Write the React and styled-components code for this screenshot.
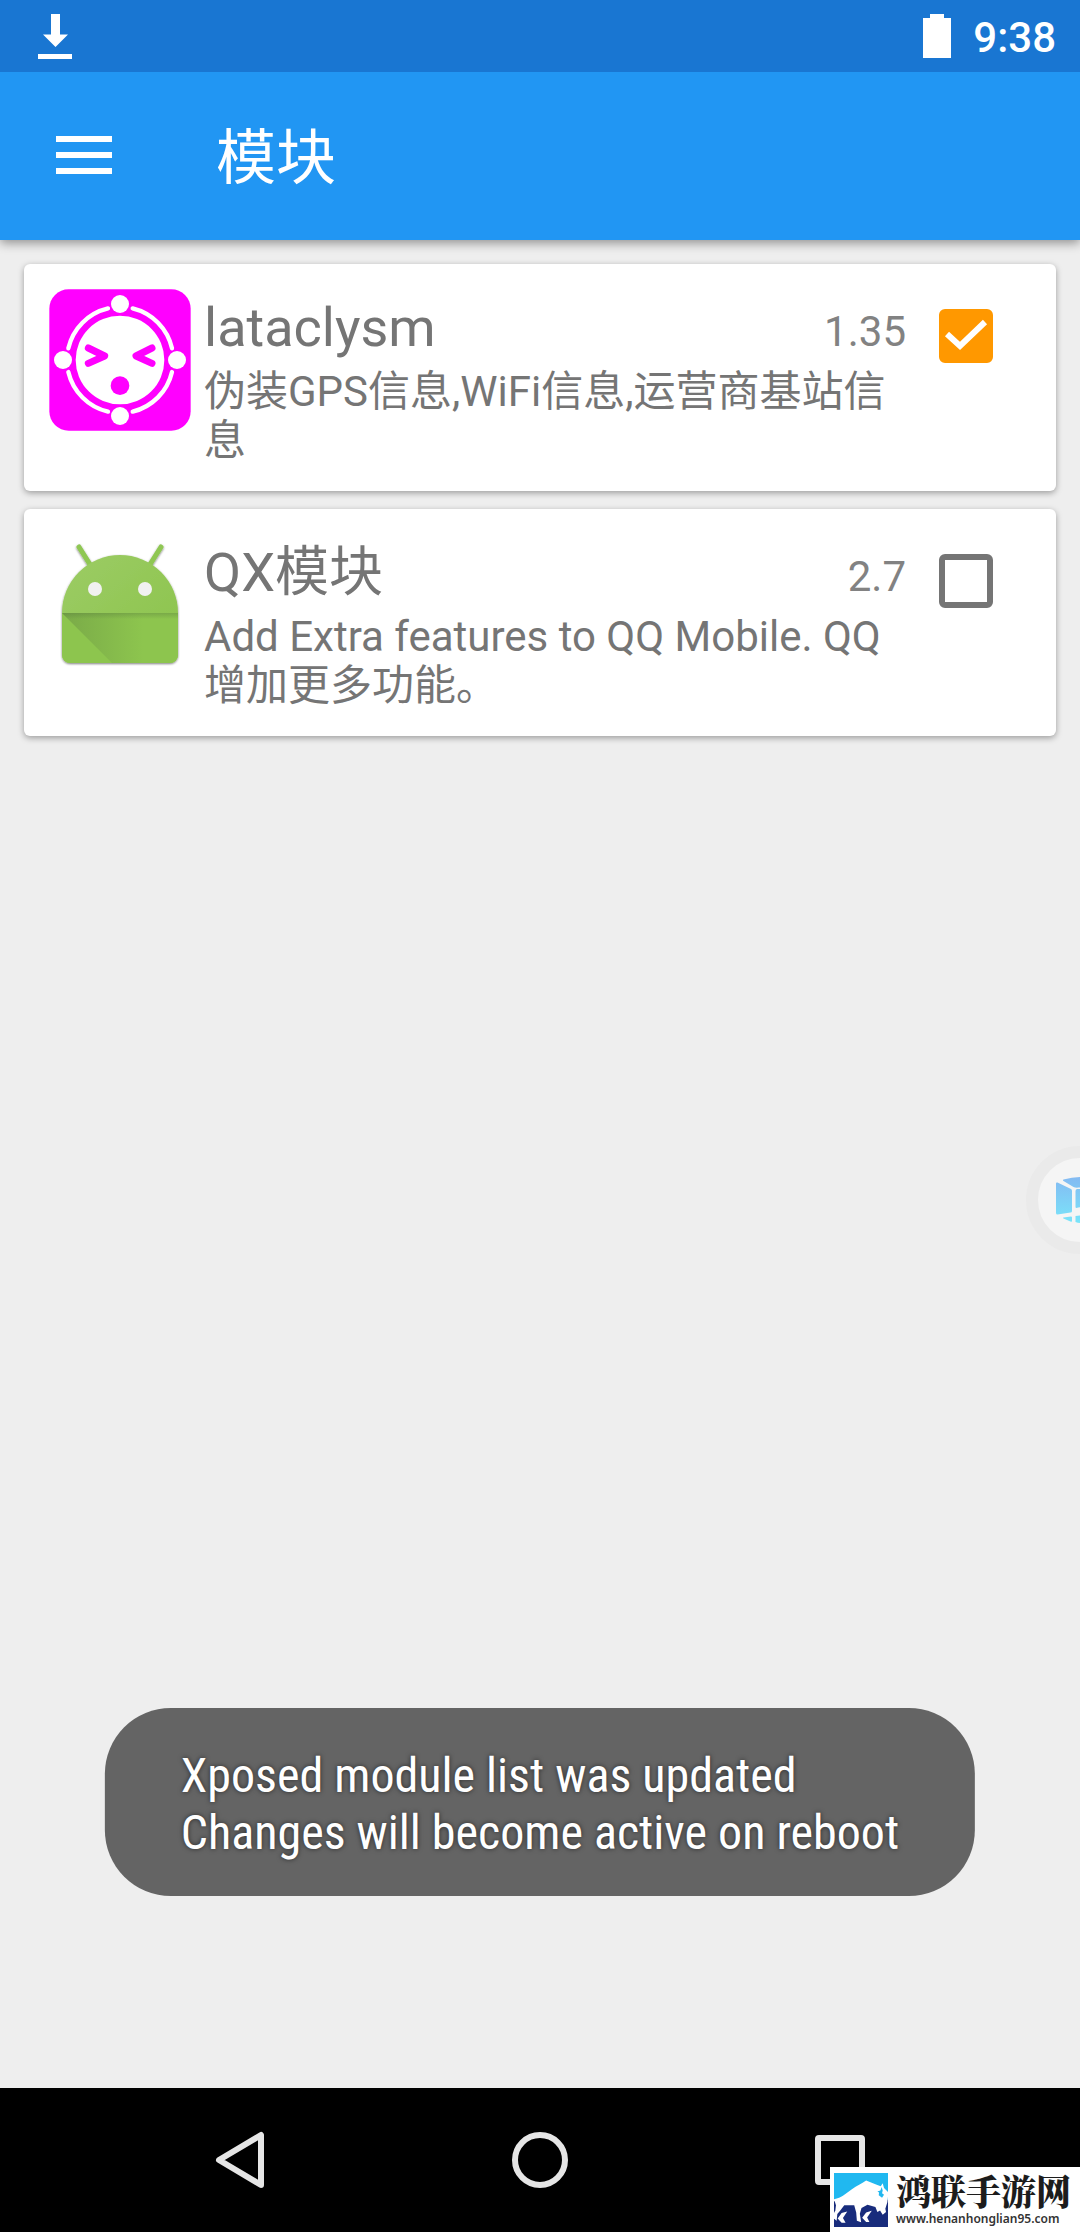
import React, { useState } from "react";
import styled, { createGlobalStyle } from "styled-components";

const MODULES = [
  {
    id: "lataclysm",
    name: "lataclysm",
    version: "1.35",
    description: "伪装GPS信息,WiFi信息,运营商基站信息",
    enabled: true,
    Icon: FaceIcon,
  },
  {
    id: "qx",
    name: "QX模块",
    version: "2.7",
    description: "Add Extra features to QQ Mobile. QQ增加更多功能。",
    enabled: false,
    Icon: AndroidIcon,
  },
];

function App() {
  const [modules, setModules] = useState(MODULES);

  const toggle = (id) => {
    setModules(
      modules.map((m) => (m.id === id ? { ...m, enabled: !m.enabled } : m))
    );
  };

  return (
    <Screen>
      <GlobalStyle />
      <StatusBar>
        <DownloadIcon />
        <StatusRight>
          <BatteryIcon />
          <Clock>9:38</Clock>
        </StatusRight>
      </StatusBar>
      <Toolbar>
        <MenuButton aria-label="menu">
          <svg width="56" height="40" viewBox="0 0 56 40" fill="#fff">
            <path d="M0 0h56v6H0zM0 16h56v6H0zM0 32h56v6H0z" />
          </svg>
        </MenuButton>
        <Title>模块</Title>
      </Toolbar>
      <ModuleList>
        {modules.map((module) => (
          <ModuleCard
            key={module.id}
            module={module}
            onToggle={() => toggle(module.id)}
          />
        ))}
      </ModuleList>
      <NavBar>
        <NavButton aria-label="back">
          <svg width="60" height="60" viewBox="0 0 60 60">
            <path d="M9 30 51 5v50z" />
          </svg>
        </NavButton>
        <NavButton aria-label="home">
          <svg width="60" height="60" viewBox="0 0 60 60">
            <circle cx="30" cy="30" r="25" />
          </svg>
        </NavButton>
        <NavButton aria-label="recents">
          <svg width="60" height="60" viewBox="0 0 60 60">
            <rect x="8" y="8" width="44" height="44" rx="1" />
          </svg>
        </NavButton>
      </NavBar>
      <Bubble aria-label="assistant">
        <CubeIcon />
      </Bubble>
      <Toast role="status">
        Xposed module list was updated
        <br />
        Changes will become active on reboot
      </Toast>
      <SiteBadge>
        <BisonLogo />
        <div>
          <SiteName>鸿联手游网</SiteName>
          <SiteUrl>www.henanhonglian95.com</SiteUrl>
        </div>
      </SiteBadge>
    </Screen>
  );
}

function ModuleCard({ module, onToggle }) {
  const { id, name, version, description, enabled, Icon } = module;
  return (
    <Card>
      <IconBox>
        <Icon />
      </IconBox>
      <Info>
        <InfoHead>
          <Name htmlFor={id}>{name}</Name>
          <Version>{version}</Version>
        </InfoHead>
        <Description>{description}</Description>
      </Info>
      <CheckWrap>
        <Check type="checkbox" id={id} checked={enabled} onChange={onToggle} />
        {enabled && (
          <svg width="54" height="54" viewBox="0 0 54 54" fill="none">
            <path d="m8 25 13 12 25-24" stroke="#fff" strokeWidth="6" />
          </svg>
        )}
      </CheckWrap>
    </Card>
  );
}

function DownloadIcon() {
  return (
    <svg width="34" height="45" viewBox="0 0 34 45" fill="#fff">
      <path d="M13 0h9v20.500h8L17.500 33 5 20.500h8zM0 40h34v5H0z" />
    </svg>
  );
}

function BatteryIcon() {
  return (
    <svg width="28" height="44" viewBox="0 0 28 44" fill="#fff">
      <path d="M7 0h14v4h7v40H0V4h7z" />
    </svg>
  );
}

function FaceIcon() {
  return (
    <svg width="144" height="144" viewBox="24 24 432 432" fill="none">
      <rect x="28" y="28" width="424" height="424" rx="58" fill="#f0f" />
      <circle cx="240" cy="240" r="133" fill="#fff" />
      <g stroke="#fff" strokeWidth="13" strokeLinecap="round">
        <path d="M204 85A160 160 0 0 0 85 205" />
        <path d="M278 85A160 160 0 0 1 396 205" />
        <path d="M204 395A160 160 0 0 1 85 276" />
        <path d="M278 395A160 160 0 0 0 396 276" />
      </g>
      <g fill="#fff">
        <circle cx="240" cy="72" r="27" />
        <circle cx="240" cy="408" r="27" />
        <circle cx="69" cy="240" r="27" />
        <circle cx="411" cy="240" r="27" />
      </g>
      <g
        stroke="#f0f"
        strokeWidth="21"
        strokeLinecap="round"
        strokeLinejoin="round"
      >
        <path d="m145 204 49 24-49 22" />
        <path d="m336 204-48 24 48 22" />
      </g>
      <circle cx="240" cy="317" r="28" fill="#f0f" />
    </svg>
  );
}

function AndroidIcon() {
  return (
    <svg width="144" height="144" viewBox="0 0 144 144">
      <defs>
        <linearGradient id="head" x1="0" y1="0" x2="1" y2="1">
          <stop offset="0" stopColor="#9ccc65" />
          <stop offset="1" stopColor="#8bc34a" />
        </linearGradient>
        <linearGradient id="fold" x1="0" y1="0" x2="1" y2="0">
          <stop offset="0" stopColor="#4c6b3a" stopOpacity="0.3" />
          <stop offset="0.700" stopColor="#4c6b3a" stopOpacity="0" />
        </linearGradient>
        <linearGradient id="edge" x1="0" y1="0" x2="0" y2="1">
          <stop offset="0" stopColor="#4c6b3a" stopOpacity="0.3" />
          <stop offset="1" stopColor="#4c6b3a" stopOpacity="0" />
        </linearGradient>
        <filter id="drop" x="-10%" y="-10%" width="120%" height="120%">
          <feDropShadow dx="0" dy="1" stdDeviation="1" floodOpacity="0.5" />
        </filter>
      </defs>
      <g filter="url(#drop)">
        <path
          d="M31 14 43 33M113 14 101 33"
          stroke="#8fc753"
          strokeWidth="5"
          strokeLinecap="round"
        />
        <path
          d="M14 80a58 58 0 0 1 116 0v42a8 8 0 0 1-8 8H22a8 8 0 0 1-8-8z"
          fill="url(#head)"
        />
      </g>
      <path d="M14 80h116v42a8 8 0 0 1-8 8H22a8 8 0 0 1-8-8z" fill="#8dc54e" />
      <path d="M14 80h116v50H64z" fill="url(#fold)" />
      <path d="M14 80h116v6H20z" fill="url(#edge)" />
      <circle cx="47" cy="56" r="7" fill="#f1f1f1" />
      <circle cx="97" cy="56" r="7" fill="#f1f1f1" />
    </svg>
  );
}

function CubeIcon() {
  return (
    <svg width="48" height="48" viewBox="0 0 48 48">
      <defs>
        <linearGradient
          id="cube"
          gradientUnits="userSpaceOnUse"
          x1="0"
          y1="0"
          x2="0"
          y2="48"
        >
          <stop offset="0" stopColor="#84b9f2" />
          <stop offset="1" stopColor="#79e6fa" />
        </linearGradient>
      </defs>
      <g fill="url(#cube)">
        <path d="M0 7.500q0-1.500 1.500-1L15 13q1 .7 1 2v20q0 1.500-1.500 1.500L1.500 38.500Q0 38.500 0 37z" />
        <path d="M7.500 3.500Q16 1 24 1q8 0 16.500 2.500 1 .5 0 1.300L25.500 11q-1.500.6-3 .6-3 .4-5-.6L7.500 5q-1-.8 0-1.500z" />
        <path d="M19.500 15q0-1.500 1.500-2h6q1.500.5 1.500 2v16q-4 0-8 1-1 0-1-1z" />
        <path d="M48 7.500q0-1.500-1.500-1L33 13q-1 .7-1 2v20q0 1.500 1.500 1.500l13 2q1.500 0 1.500-1.500z" />
        <path d="M7.500 41.500 15 40.500q1 0 1 1V45q0 1-1 .7l-7.500-3.200q-1-.5 0-1zM19.500 40q4.500-1 9 0v6q-4.500 2-9 0z" />
      </g>
    </svg>
  );
}

function BisonLogo() {
  return (
    <svg width="54" height="54" viewBox="161 307 163 163">
      <path fill="#20b8f0" d="M161 307h163v163H161z" />
      <path fill="#182c7c" d="M161 388h163v82H161z" />
      <path
        fill="#fff"
        d="M161 386c12-2 20-5 27-10l27-20c15-10 29-17 43-26l30 12 14 5 6-9 4 14 12 12v14l-2 17-6 20 2 10-10 8-8-13-8 5-6-15-24-7-18 10-5 17 4 26-13-5-2-25-6-22-30 0-12 16-9 11-2 20-8-6z"
      />
      <path
        fill="#fff"
        d="m201 423-17 5-12 16 12 13h12l-8-14zM275 421l-17 5-12 16 12 13h10l-7-14z"
      />
      <path fill="#20b8f0" d="m305 349 3 11-2 8 6 5-6 9-10-8 1-8-5-3 9-3z" />
      <path fill="#182c7c" d="m163 392 4 12-2 16-4 8v-36z" />
    </svg>
  );
}

const GlobalStyle = createGlobalStyle`
  * {
    box-sizing: border-box;
  }
  body {
    margin: 0;
    font-family: Roboto, "Noto Sans CJK SC", sans-serif;
    background: #eee;
  }
  button {
    padding: 0;
    border: 0;
    background: none;
    cursor: pointer;
  }
  svg {
    display: block;
    flex: none;
  }
`;

const Screen = styled.div`
  position: relative;
  display: flex;
  flex-direction: column;
  min-height: 100vh;
  overflow: hidden;
`;

const StatusBar = styled.div`
  position: relative;
  z-index: 1;
  display: flex;
  align-items: center;
  justify-content: space-between;
  height: 72px;
  padding: 0 24px 0 38px;
  background: #1976d2;
`;

const StatusRight = styled.div`
  display: flex;
  align-items: center;
  gap: 22px;
`;

const Clock = styled.span`
  padding-top: 4px;
  color: #fff;
  font-size: 42px;
  font-weight: 500;
  line-height: 48px;
`;

const Toolbar = styled.header`
  display: flex;
  align-items: center;
  gap: 104px;
  height: 168px;
  padding: 0 56px;
  background: #2196f3;
  box-shadow: 0 3px 10px rgba(0, 0, 0, 0.4);
`;

const MenuButton = styled.button`
  display: flex;
`;

const Title = styled.h1`
  margin: 0;
  padding-top: 6px;
  color: #fff;
  font-size: 60px;
  font-weight: 400;
  line-height: 72px;
`;

const ModuleList = styled.main`
  display: flex;
  flex: 1;
  flex-direction: column;
  gap: 18px;
  padding: 24px;
`;

const Card = styled.section`
  display: grid;
  grid-template-columns: 144px 1fr 54px;
  align-items: start;
  padding: 0 63px 26px 24px;
  border-radius: 6px;
  background: #fff;
  box-shadow: 0 2px 6px rgba(0, 0, 0, 0.35);
`;

const IconBox = styled.div`
  padding-top: 24px;
`;

const Info = styled.div`
  padding: 32px 33px 0 12px;
  color: #757575;
`;

const InfoHead = styled.div`
  display: flex;
  align-items: baseline;
  justify-content: space-between;
  margin-bottom: 7px;
`;

const Name = styled.label`
  font-size: 54px;
  line-height: 64px;
`;

const Version = styled.span`
  color: #828282;
  font-size: 42px;
  line-height: 49px;
`;

const Description = styled.p`
  margin: 0;
  font-size: 42px;
  line-height: 49px;
`;

const CheckWrap = styled.div`
  display: grid;
  padding-top: 45px;
  & > * {
    grid-area: 1 / 1;
  }
  & > svg {
    z-index: 1;
    pointer-events: none;
  }
`;

const Check = styled.input`
  appearance: none;
  width: 54px;
  height: 54px;
  margin: 0;
  border: 6px solid #757575;
  border-radius: 6px;
  &:checked {
    border-color: #ff9800;
    background: #ff9800;
  }
`;

const NavBar = styled.nav`
  display: flex;
  align-items: center;
  justify-content: center;
  gap: 240px;
  height: 144px;
  background: #000;
`;

const NavButton = styled.button`
  & > svg {
    fill: none;
    stroke: #e6e6e6;
    stroke-width: 6px;
    stroke-linejoin: round;
  }
`;

/* half of the bubble hangs over the right edge */
const Bubble = styled.button`
  position: absolute;
  top: 1146px;
  right: -54px;
  display: grid;
  place-items: center;
  width: 108px;
  height: 108px;
  border: 12px solid #eaeaea;
  border-radius: 50%;
  background: #f5f5f5;
`;

const Toast = styled.div`
  position: absolute;
  bottom: 336px;
  left: 50%;
  padding: 39px 76px 35px;
  border-radius: 66px;
  background: #646464;
  color: #fff;
  font-family: "Roboto Condensed", Roboto, sans-serif;
  font-size: 48px;
  line-height: 57px;
  white-space: nowrap;
  text-shadow: 0 0 5px rgba(0, 0, 0, 0.6);
  transform: translateX(-50%);
`;

const SiteBadge = styled.div`
  position: absolute;
  right: 0;
  bottom: 0;
  display: flex;
  align-items: center;
  gap: 8px;
  width: 250px;
  height: 65px;
  padding-left: 4px;
  background: #fff;
`;

const SiteName = styled.div`
  color: #1c1c1c;
  font-family: "Noto Serif CJK SC", "Noto Sans CJK SC", serif;
  font-size: 35px;
  font-weight: 900;
  line-height: 38px;
`;

const SiteUrl = styled.div`
  color: #333;
  font-family: "Noto Sans", sans-serif;
  font-size: 12px;
  font-weight: 600;
  line-height: 20px;
`;

export default App;
